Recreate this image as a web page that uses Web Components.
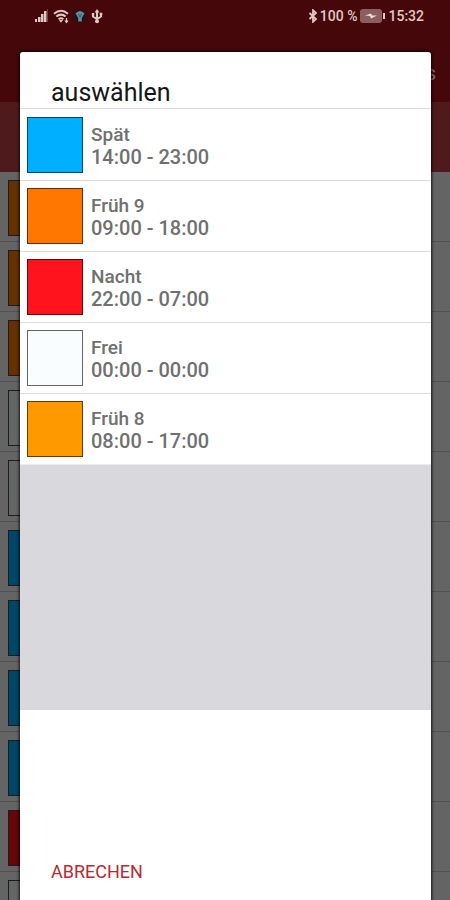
<!DOCTYPE html>
<html lang="de">
<head>
<meta charset="utf-8">
<meta name="viewport" content="width=device-width, initial-scale=1">
<title>Schicht auswählen</title>
<style>
html, body { margin: 0; height: 100%; }
body { font-family: Roboto, "Noto Sans", sans-serif; background: #646464; overflow: hidden; }
</style>
</head>
<body>
<shift-app></shift-app>
<script>
const define = (name, html, setup) => customElements.define(name, class extends HTMLElement {
  connectedCallback() {
    if (this.shadowRoot) return;
    this.attachShadow({ mode: 'open' }).innerHTML = html;
    if (setup) setup(this, this.shadowRoot);
  }
});

define('status-bar', `
<style>
:host { display: flex; justify-content: space-between; align-items: center; height: 32px; padding: 0 26px 0 34px; color: #e0c8c6; font-size: 14px; font-weight: 500; box-sizing: border-box; }
div { display: flex; align-items: center; gap: 4px; }
svg { display: block; }
.end { gap: 2px; }
</style>
<div>
  <svg width="15" height="14" viewBox="0 0 15 14" fill="currentColor"><path d="M1 10h2v3H1zM4 8h2.500v5H4zM7 5h2.500v8H7zM10 2h2.500v11H10z"/><path d="M13 0h1v13h-1z" opacity=".3"/></svg>
  <svg width="17" height="15" viewBox="0 0 17 15" fill="none" stroke="currentColor" stroke-width="2"><path d="M1 4.800Q8-1.300 15 4.800M3.300 7.600q4.700-4 9.400 0M5.600 10.200q2.400-2 4.800 0"/><path d="M6 11h4L8 13.800z" fill="currentColor" stroke="none"/><path d="M13.500 9v4M12 11.500l1.500 2 1.500-2" stroke-width="1.200"/></svg>
  <svg width="12" height="14" viewBox="0 0 12 14"><circle cx="6" cy="7" r="5.900" fill="#151a21"/><path d="M1.500 4.500Q6-.5 10.500 4.500L7.800 9v3.500H4.200V9z" fill="#66889a"/><path d="M4.500 5L6 8l1.500-3" fill="none" stroke="#3a5566"/></svg>
  <svg width="14" height="15" viewBox="0 0 14 15" fill="none" stroke="currentColor" stroke-width="2"><path d="M7 12V3M3 5v2.500L7 10l4-2.500V5"/><path d="M4.500 3.500L7 0l2.500 3.500zM1.800 4h2.500v2.500H1.800z" fill="currentColor" stroke="none"/><circle cx="11" cy="5" r="1.500" fill="currentColor" stroke="none"/><circle cx="7" cy="12.300" r="2" fill="currentColor" stroke="none"/></svg>
</div>
<div class="end">
  <svg width="10" height="14" viewBox="0 0 10 14" fill="none" stroke="currentColor" stroke-width="1.800"><path d="M1.500 4L8 10 5 12.800V1.200L8 4 1.500 10"/></svg>
  <span>100 %</span>
  <svg width="27" height="14" viewBox="0 0 27 14"><rect x="1" y="0" width="22" height="14" rx="3" fill="#8b5e5f"/><path d="M24 4h2v6h-2z" fill="currentColor"/><path d="M6 6.500l6-2 1 2h5l-6 3-1-2.500z" fill="#f0dfdd"/></svg>
  <span>15:32</span>
</div>`);

define('calendar-row', `
<style>
:host { display: block; height: 70px; box-sizing: border-box; padding: 8px; border-bottom: 1px solid #515151; }
i { display: block; width: 56px; height: 56px; box-sizing: border-box; border: 1px solid #1c1c1c; background: var(--shade); }
</style><i></i>`);

define('color-swatch', `
<style>
:host { display: block; width: 56px; height: 56px; box-sizing: border-box; border: 1px solid rgba(0, 0, 0, .6); background: var(--shade); }
</style>`);

define('shift-option', `
<style>
:host { display: block; border-bottom: 1px solid #dcdcdc; }
:host(:last-of-type) { border-bottom-color: #ececee; }
button { display: flex; gap: 8px; width: 100%; height: 70px; box-sizing: border-box; padding: 7px; border: 0; background: none; font: 500 20px/23px Roboto, "Noto Sans", sans-serif; color: #707070; text-align: left; cursor: pointer; }
span { display: block; }
.text { padding-top: 6px; }
.name { font-size: 19px; }
</style>
<button type="button"><color-swatch></color-swatch><span class="text"><span class="name"><slot name="name"></slot></span><span><slot></slot></span></span></button>`);

define('shift-dialog', `
<style>
:host { display: flex; flex-direction: column; background: #fff; border-radius: 3px 3px 0 0; box-shadow: 0 0 3px 1px rgba(0, 0, 0, .8); overflow: hidden; }
h1 { margin: 0; height: 57px; box-sizing: border-box; padding: 27px 31px 0; border-bottom: 1px solid #dcdcdc; font: 400 25px/28px Roboto, "Noto Sans", sans-serif; color: #161616; }
.list { flex: 1; background: #d9d8dd; }
.items { padding-top: 1px; background: #fff; }
footer { height: 190px; box-sizing: border-box; display: flex; align-items: flex-end; padding: 0 31px 16px; }
footer button { border: 0; padding: 0; background: none; font: 400 18px/24px Roboto, "Noto Sans", sans-serif; color: #b72a30; cursor: pointer; }
</style>
<h1>auswählen</h1>
<div class="list"><div class="items"><slot></slot></div></div>
<footer><button type="button">ABRECHEN</button></footer>`, el => {
  el.setAttribute('role', 'dialog');
  el.setAttribute('aria-label', 'auswählen');
});

define('shift-app', `
<style>
:host { display: block; position: relative; height: 100vh; overflow: hidden; background: #646464; }
header { height: 102px; background: #450709; box-sizing: border-box; }
.title { display: flex; justify-content: flex-end; padding: 24px 14px 0; font-size: 20px; line-height: 34px; color: #8a6a6b; }
.tabs { height: 70px; background: #4f1a1c; }
shift-dialog { position: absolute; inset: 52px 19px 0 20px; }
</style>
<header><status-bar></status-bar><div class="title">s</div></header>
<div class="tabs"></div>
<main></main>
<shift-dialog>
  <shift-option style="--shade:#00afff"><span slot="name">Spät</span>14:00 - 23:00</shift-option>
  <shift-option style="--shade:#ff7700"><span slot="name">Früh 9</span>09:00 - 18:00</shift-option>
  <shift-option style="--shade:#ff141e"><span slot="name">Nacht</span>22:00 - 07:00</shift-option>
  <shift-option style="--shade:#fafdff"><span slot="name">Frei</span>00:00 - 00:00</shift-option>
  <shift-option style="--shade:#ff9900"><span slot="name">Früh 8</span>08:00 - 17:00</shift-option>
</shift-dialog>`, (el, root) => {
  const shades = ['#663000', '#663000', '#663000', '#646566', '#646566', '#004666', '#004666', '#004666', '#004666', '#660609', '#646566'];
  for (const shade of shades) {
    const row = document.createElement('calendar-row');
    row.style.setProperty('--shade', shade);
    root.querySelector('main').append(row);
  }
});
</script>
</body>
</html>
